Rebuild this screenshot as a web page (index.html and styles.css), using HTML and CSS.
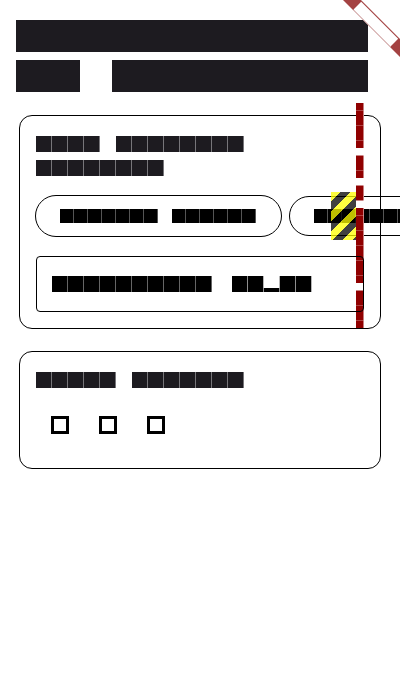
FILE: index.html
```html
<!DOCTYPE html>
<html lang="en">
<head>
<meta charset="utf-8">
<meta name="viewport" content="width=device-width, initial-scale=1">
<title>█</title>
<link rel="stylesheet" href="styles.css">
</head>
<body>
<main class="page">
  <h1 class="title">███████████ ██　████████</h1>

  <section class="card">
    <h2 class="heading"><span class="cells">████　████████ ████████</span></h2>
    <div class="actions">
      <button type="button" class="button button-focused"><span class="cells cells-small">███████　██████</span></button>
      <button type="button" class="button"><span class="cells cells-small">██████████████</span></button>
      <div class="overflow">
        <div class="stripes"></div>
        <div class="overflow-label"><span class="overflow-text">█████　██████████　██　███　██████</span></div>
      </div>
    </div>
    <div class="field-box">
      <input class="field" type="text" aria-label="█" value="██████████　 ██▂██">
    </div>
  </section>

  <section class="card">
    <h2 class="heading"><span class="cells">█████　███████</span></h2>
    <div class="checks">
      <label class="check"><input type="checkbox" aria-label="1"></label>
      <label class="check"><input type="checkbox" aria-label="2"></label>
      <label class="check"><input type="checkbox" aria-label="3"></label>
    </div>
  </section>
</main>
<svg class="ribbon" viewBox="0 0 60 60" aria-hidden="true">
  <path fill="#a44242" d="M3 0H21L60 39V57Z"/>
  <path fill="#fff" d="M13.500 9.500L21.200 1.800L58.200 38.800L50.500 46.500Z"/>
  <path stroke="#eadede" fill="none" d="M13.500 10L50.500 47"/>
</svg>
</body>
</html>
```

FILE: styles.css
```css
* {
  box-sizing: border-box;
}

html {
  overflow: hidden;
}

body {
  margin: 0;
  min-height: 100vh;
  position: relative;
  overflow: hidden;
  background: #fff;
  color: #1d1b20;
  font-family: "Noto Sans CJK JP", sans-serif;
}

.page {
  padding: 14px 16px;
}

.title {
  margin: 0 0 21px;
  font-size: 32px;
  line-height: 40px;
  font-weight: 400;
  color: transparent;
  background: #1d1b20;
  -webkit-background-clip: text;
  background-clip: text;
}

.card {
  margin: 0 3px 22px;
  padding: 15px 16px 16px;
  border: 1px solid #000;
  border-radius: 13px;
}

.heading {
  margin: 0 0 16px;
  width: 220px;
  font-size: 16px;
  line-height: 24px;
  font-weight: 400;
}

.cells {
  display: block;
  color: transparent;
  background: repeating-linear-gradient(90deg, #1d1b20 0 15px, #77767a 15px 16px);
  -webkit-background-clip: text;
  background-clip: text;
}

.cells-small {
  background-image: repeating-linear-gradient(90deg, #000 0 13px, #555 13px 14px);
}

.actions {
  position: relative;
  display: flex;
  align-items: center;
  gap: 7px;
  margin: 0 0 19px -1px;
}

.button {
  flex: none;
  height: 40px;
  padding: 0 24px 2px;
  border: 1px solid #000;
  border-radius: 21px;
  background: none;
  font: 14px/20px "Noto Sans CJK JP", sans-serif;
}

.button-focused {
  height: 42px;
  padding-right: 25px;
}

.overflow {
  position: absolute;
  right: 0;
  bottom: -91px;
  display: flex;
  align-items: flex-start;
}

.stripes {
  width: 25px;
  height: 48px;
  margin-top: 89px;
  background: linear-gradient(135deg,
    rgba(0, 0, 0, .75) 12.5%,
    rgba(255, 255, 0, .75) 12.5% 37.5%,
    rgba(0, 0, 0, .75) 37.5% 62.5%,
    rgba(255, 255, 0, .75) 62.5% 87.5%,
    rgba(0, 0, 0, .75) 87.5%) -5px 0 / 20px 20px;
}

.overflow-label {
  width: 8px;
  background: #fff;
  font-size: 10px;
}

.overflow-text {
  display: block;
  width: 8px;
  writing-mode: vertical-rl;
  transform: rotate(180deg);
  font-size: 75%;
  line-height: 8px;
  white-space: nowrap;
  color: transparent;
  background: #900000;
  -webkit-background-clip: text;
  background-clip: text;
}

.field-box {
  position: relative;
  border: 1px solid #000;
  border-radius: 4px;
}

.field {
  display: block;
  width: 100%;
  height: 54px;
  padding: 0 15px 2px;
  border: 0;
  color: transparent;
  background:
    repeating-linear-gradient(90deg, #000 0 15px, #666 15px 16px) 15px 0 / 176px 100% no-repeat,
    repeating-linear-gradient(90deg, #000 0 15px, #666 15px 16px) 195px 0 / 100% 100% no-repeat;
  -webkit-background-clip: text;
  background-clip: text;
  font: 16px/24px "Noto Sans CJK JP", sans-serif;
}

.checks {
  display: flex;
  margin-top: -6px;
  margin-bottom: 3px;
}

.check {
  display: grid;
  place-items: center;
  width: 48px;
  height: 48px;
}

.check input {
  appearance: none;
  width: 18px;
  height: 18px;
  margin: 0;
  border: 3px solid #000;
}

.ribbon {
  position: absolute;
  top: 0;
  right: 0;
  width: 60px;
  height: 60px;
}
```
